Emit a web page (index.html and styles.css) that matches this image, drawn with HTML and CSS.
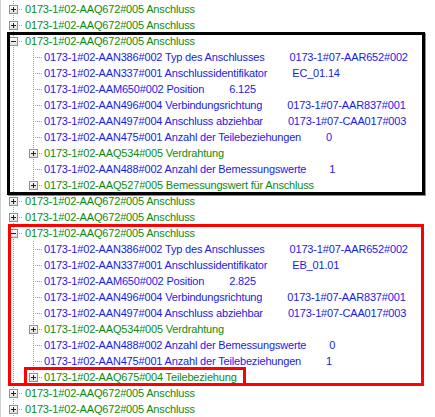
FILE: index.html
```html
<!DOCTYPE html>
<html lang="de">
<head>
<meta charset="utf-8">
<title>Merkmalsbaum</title>
<link rel="stylesheet" href="styles.css">
</head>
<body>
<div class="tree">
  <div class="row"><span class="g vh"><svg class="exp" viewBox="0 0 9 9"><rect x="0.5" y="0.5" width="8" height="8"/><path d="M2 4.5h5M4.5 2v5"/></svg></span><span class="txt node">0173-1#02-AAQ672#005 Anschluss</span></div>
  <div class="row"><span class="g vh"><svg class="exp" viewBox="0 0 9 9"><rect x="0.5" y="0.5" width="8" height="8"/><path d="M2 4.5h5M4.5 2v5"/></svg></span><span class="txt node">0173-1#02-AAQ672#005 Anschluss</span></div>

  <div class="grp mark-black">
    <div class="row"><span class="g vh"><svg class="exp" viewBox="0 0 9 9"><rect x="0.5" y="0.5" width="8" height="8"/><path d="M2 4.5h5"/></svg></span><span class="txt node">0173-1#02-AAQ672#005 Anschluss</span></div>
    <div class="row"><span class="g v"></span><span class="g vh"></span><span class="txt prop">0173-1#02-AAN386#002 Typ des Anschlusses<span class="val">0173-1#07-AAR652#002</span></span></div>
    <div class="row"><span class="g v"></span><span class="g vh"></span><span class="txt prop">0173-1#02-AAN337#001 Anschlussidentifikator<span class="val">EC_01.14</span></span></div>
    <div class="row"><span class="g v"></span><span class="g vh"></span><span class="txt prop">0173-1#02-AAM650#002 Position<span class="val">6.125</span></span></div>
    <div class="row"><span class="g v"></span><span class="g vh"></span><span class="txt prop">0173-1#02-AAN496#004 Verbindungsrichtung<span class="val">0173-1#07-AAR837#001</span></span></div>
    <div class="row"><span class="g v"></span><span class="g vh"></span><span class="txt prop">0173-1#02-AAN497#004 Anschluss abziehbar<span class="val">0173-1#07-CAA017#003</span></span></div>
    <div class="row"><span class="g v"></span><span class="g vh"></span><span class="txt prop">0173-1#02-AAN475#001 Anzahl der Teilebeziehungen<span class="val">0</span></span></div>
    <div class="row"><span class="g v"></span><span class="g vh"><svg class="exp" viewBox="0 0 9 9"><rect x="0.5" y="0.5" width="8" height="8"/><path d="M2 4.5h5M4.5 2v5"/></svg></span><span class="txt node">0173-1#02-AAQ534#005 Verdrahtung</span></div>
    <div class="row"><span class="g v"></span><span class="g vh"></span><span class="txt prop">0173-1#02-AAN488#002 Anzahl der Bemessungswerte<span class="val tight">1</span></span></div>
    <div class="row"><span class="g v"></span><span class="g lh"><svg class="exp" viewBox="0 0 9 9"><rect x="0.5" y="0.5" width="8" height="8"/><path d="M2 4.5h5M4.5 2v5"/></svg></span><span class="txt node">0173-1#02-AAQ527#005 Bemessungswert für Anschluss</span></div>
  </div>

  <div class="row"><span class="g vh"><svg class="exp" viewBox="0 0 9 9"><rect x="0.5" y="0.5" width="8" height="8"/><path d="M2 4.5h5M4.5 2v5"/></svg></span><span class="txt node">0173-1#02-AAQ672#005 Anschluss</span></div>
  <div class="row"><span class="g vh"><svg class="exp" viewBox="0 0 9 9"><rect x="0.5" y="0.5" width="8" height="8"/><path d="M2 4.5h5M4.5 2v5"/></svg></span><span class="txt node">0173-1#02-AAQ672#005 Anschluss</span></div>

  <div class="grp mark-red">
    <div class="row"><span class="g vh"><svg class="exp" viewBox="0 0 9 9"><rect x="0.5" y="0.5" width="8" height="8"/><path d="M2 4.5h5"/></svg></span><span class="txt node">0173-1#02-AAQ672#005 Anschluss</span></div>
    <div class="row"><span class="g v"></span><span class="g vh"></span><span class="txt prop">0173-1#02-AAN386#002 Typ des Anschlusses<span class="val">0173-1#07-AAR652#002</span></span></div>
    <div class="row"><span class="g v"></span><span class="g vh"></span><span class="txt prop">0173-1#02-AAN337#001 Anschlussidentifikator<span class="val">EB_01.01</span></span></div>
    <div class="row"><span class="g v"></span><span class="g vh"></span><span class="txt prop">0173-1#02-AAM650#002 Position<span class="val">2.825</span></span></div>
    <div class="row"><span class="g v"></span><span class="g vh"></span><span class="txt prop">0173-1#02-AAN496#004 Verbindungsrichtung<span class="val">0173-1#07-AAR837#001</span></span></div>
    <div class="row"><span class="g v"></span><span class="g vh"></span><span class="txt prop">0173-1#02-AAN497#004 Anschluss abziehbar<span class="val">0173-1#07-CAA017#003</span></span></div>
    <div class="row"><span class="g v"></span><span class="g vh"><svg class="exp" viewBox="0 0 9 9"><rect x="0.5" y="0.5" width="8" height="8"/><path d="M2 4.5h5M4.5 2v5"/></svg></span><span class="txt node">0173-1#02-AAQ534#005 Verdrahtung</span></div>
    <div class="row"><span class="g v"></span><span class="g vh"></span><span class="txt prop">0173-1#02-AAN488#002 Anzahl der Bemessungswerte<span class="val tight">0</span></span></div>
    <div class="row"><span class="g v"></span><span class="g vh"></span><span class="txt prop">0173-1#02-AAN475#001 Anzahl der Teilebeziehungen<span class="val">1</span></span></div>
    <div class="row sub-row"><span class="g v"></span><span class="g lh mark-sub"><svg class="exp" viewBox="0 0 9 9"><rect x="0.5" y="0.5" width="8" height="8"/><path d="M2 4.5h5M4.5 2v5"/></svg></span><span class="txt node">0173-1#02-AAQ675#004 Teilebeziehung</span></div>
  </div>

  <div class="row"><span class="g vh"><svg class="exp" viewBox="0 0 9 9"><rect x="0.5" y="0.5" width="8" height="8"/><path d="M2 4.5h5M4.5 2v5"/></svg></span><span class="txt node">0173-1#02-AAQ672#005 Anschluss</span></div>
  <div class="row"><span class="g vh"><svg class="exp" viewBox="0 0 9 9"><rect x="0.5" y="0.5" width="8" height="8"/><path d="M2 4.5h5M4.5 2v5"/></svg></span><span class="txt node">0173-1#02-AAQ672#005 Anschluss</span></div>
</div>
</body>
</html>
```
FILE: styles.css
```css
html, body {
  margin: 0;
  padding: 0;
  background: #ffffff;
}

body {
  width: 435px;
  height: 417px;
  overflow: hidden;
}

/* tree view control */
.tree {
  box-sizing: border-box;
  height: 417px;
  padding: 1px 0 0 2px;
  border-left: 1px solid #d0d0d0;
  font-family: "Liberation Sans", Arial, sans-serif;
  font-size: 11px;
  letter-spacing: -0.17px;
}

.row {
  display: flex;
  align-items: center;
  height: 16px;
  white-space: pre;
}

/* indentation cell with dotted connector lines */
.g {
  flex: none;
  box-sizing: border-box;
  width: 20px;
  height: 16px;
  display: flex;
  align-items: flex-start;
  padding: 4px 0 0 6px;
  background-repeat: no-repeat;
}

.g.v {
  background-image: repeating-linear-gradient(to bottom, #a0a0a0 0 1px, transparent 1px 2px);
  background-position: 10px 0;
  background-size: 1px 16px;
}

.g.vh {
  background-image:
    repeating-linear-gradient(to bottom, #a0a0a0 0 1px, transparent 1px 2px),
    repeating-linear-gradient(to right, #a0a0a0 0 1px, transparent 1px 2px);
  background-position: 10px 0, 10px 8px;
  background-size: 1px 16px, 10px 1px;
}

.g.lh {
  background-image:
    repeating-linear-gradient(to bottom, #a0a0a0 0 1px, transparent 1px 2px),
    repeating-linear-gradient(to right, #a0a0a0 0 1px, transparent 1px 2px);
  background-position: 10px 0, 10px 8px;
  background-size: 1px 9px, 10px 1px;
}

/* expand / collapse box */
.exp {
  display: block;
  width: 9px;
  height: 9px;
  background: linear-gradient(#ffffff, #dcdcdc);
}

.exp rect {
  fill: none;
  stroke: #919191;
}

.exp path {
  stroke: #202020;
  fill: none;
}

.txt {
  margin-left: 2px;
}

/* second level sits one pixel closer to its connector */
.g + .g + .txt {
  margin-left: 1px;
}

.node {
  color: #0e8a12;
}

.prop {
  color: #1a1ae8;
}

.val {
  margin-left: 25px;
}

.val.tight {
  margin-left: 23px;
}

/* highlight frames drawn over the tree */
.grp,
.sub-row {
  position: relative;
}

.mark-black::after,
.mark-red::after,
.mark-sub::after {
  content: "";
  position: absolute;
  pointer-events: none;
  box-sizing: border-box;
}

.mark-black::after {
  top: -1px;
  left: 4px;
  width: 418px;
  height: 163px;
  border: 3px solid #000000;
  box-shadow: 1px 1px 0 #8c8c8c;
}

.mark-red::after {
  top: -1px;
  left: 5px;
  width: 416px;
  height: 162px;
  border: 3px solid #ff0000;
}

.mark-sub::after {
  top: -2px;
  left: 21px;
  width: 222px;
  height: 19px;
  border: 3px solid #ff0000;
}
```
